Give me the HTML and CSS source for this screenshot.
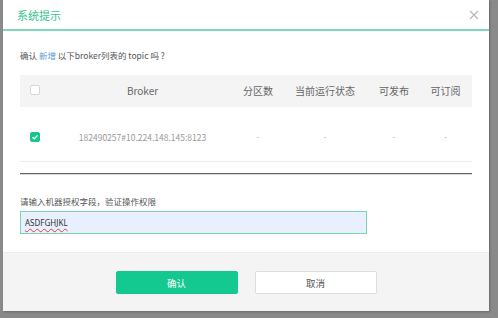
FILE: index.html
```html
<!DOCTYPE html>
<html lang="zh">
<head>
<meta charset="utf-8">
<link rel="stylesheet" href="styles.css">
</head>
<body>
<div class="dialog">
  <div class="header">
    <span class="title">系统提示</span>
    <svg class="close" width="10" height="10" viewBox="0 0 10 10"><path d="M1 1L9 9M9 1L1 9" stroke="#b5b5b5" stroke-width="1.1" fill="none"/></svg>
  </div>
  <div class="body">
    <p class="confirm">确认 <span class="hl">新增</span> 以下broker列表的 topic 吗 ?</p>
    <div class="table">
      <div class="row head">
        <div class="cell chk"><span class="box"></span></div>
        <div class="cell">Broker</div>
        <div class="cell">分区数</div>
        <div class="cell">当前运行状态</div>
        <div class="cell">可发布</div>
        <div class="cell last">可订阅</div>
      </div>
      <div class="row data">
        <div class="cell chk"><span class="box on"><svg width="8" height="8" viewBox="0 0 8 8"><path d="M1.5 4.2L3.3 5.8L6.6 2.4" stroke="#fff" stroke-width="1.3" fill="none"/></svg></span></div>
        <div class="cell">182490257#10.224.148.145:8123</div>
        <div class="cell dash">-</div>
        <div class="cell dash">-</div>
        <div class="cell dash">-</div>
        <div class="cell dash last">-</div>
      </div>
    </div>
    <div class="rule"></div>
    <p class="label">请输入机器授权字段，验证操作权限</p>
    <div class="input"><span class="val">ASDFGHJKL</span></div>
  </div>
  <div class="footer">
    <button class="btn primary">确认</button>
    <button class="btn">取消</button>
  </div>
</div>
</body>
</html>
```
FILE: styles.css
```css
html, body {
  margin: 0;
  padding: 0;
  background: #8a8a8a;
  width: 498px;
  height: 318px;
  overflow: hidden;
}
body {
  font-family: "Noto Sans CJK SC", "Noto Sans", sans-serif;
  color: #555;
}
.dialog {
  margin-left: 3px;
  width: 486px;
  height: 311px;
  background: #fff;
  display: flex;
  flex-direction: column;
  box-shadow: 1px 1px 2px rgba(0,0,0,0.25);
}
.header {
  height: 29px;
  border-bottom: 2px solid #80d8b9;
  display: flex;
  align-items: center;
  justify-content: space-between;
  padding: 0 10px 0 14px;
}
.title {
  font-size: 11px;
  line-height: 14px;
  color: #34c38f;
}
.close { display: block; margin-top: 1px; }
.body {
  padding: 0 17px 0 17px;
  flex: 1;
}
.confirm {
  margin: 18px 0 0 0;
  font-size: 8.5px;
  line-height: 12px;
  color: #555;
}
.hl { color: #5b9bd5; }
.table {
  margin-top: 14px;
}
.row {
  display: grid;
  grid-template-columns: 40px 165px 66px 68px 70px 43px;
}
.row.head {
  background: #f4f4f4;
  height: 32px;
  align-items: center;
  font-size: 10px;
  color: #666;
}
.row.data {
  border-bottom: 1px solid #ececec;
  align-items: center;
  padding-top: 6px;
  box-sizing: border-box;
  height: 55px;
  font-size: 8.5px;
  color: #999;
}
.cell {
  text-align: center;
  line-height: 12px;
  white-space: nowrap;
}
.cell.last { padding-right: 10px; }
.cell.chk { text-align: left; padding-left: 10px; display: flex; }
.row.head .chk { margin-top: -3px; }
.box {
  display: inline-flex;
  width: 8px;
  height: 8px;
  border: 1px solid #d6d6d6;
  border-radius: 2px;
  background: #fff;
  align-items: center;
  justify-content: center;
}
.box.on {
  background: #19c58c;
  border-color: #19c58c;
}
.box svg { display: block; }
.dash { color: #aaa; font-size: 8px; }
.rule {
  margin-top: 11px;
  height: 1px;
  background: #666;
  border-bottom: 1px solid #d8d8d8;
}
.label {
  margin: 20px 0 0 0;
  font-size: 8.5px;
  line-height: 12px;
  color: #555;
}
.input {
  margin-top: 4px;
  width: 347px;
  height: 23px;
  box-sizing: border-box;
  border: 1px solid #7dd3b5;
  background: #e8f0fe;
  display: flex;
  align-items: center;
  padding-left: 4px;
}
.val {
  font-family: "Noto Sans", sans-serif;
  font-size: 8px;
  color: #333;
  text-decoration: underline wavy #e04040;
  text-decoration-thickness: 1px;
  text-underline-offset: 2px;
}
.footer {
  height: 59px;
  background: #f4f4f4;
  border-top: 1px solid #ececec;
  box-sizing: border-box;
  display: flex;
  justify-content: center;
  align-items: flex-start;
  gap: 17px;
  padding-top: 18px;
}
.btn {
  width: 122px;
  height: 23px;
  border: 1px solid #ddd;
  border-radius: 2px;
  background: #fff;
  font-family: "Noto Sans CJK SC", sans-serif;
  font-size: 9.5px;
  color: #555;
  padding: 0;
}
.btn.primary {
  background: #13c98f;
  border-color: #13c98f;
  color: #fff;
}
```
